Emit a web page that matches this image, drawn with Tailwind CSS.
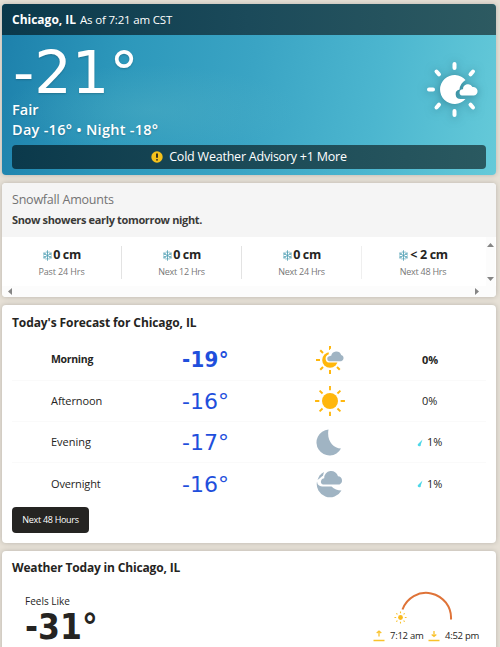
<!DOCTYPE html>
<html lang="en">
<head>
<meta charset="utf-8">
<title>Chicago, IL Weather</title>
<script src="https://cdn.jsdelivr.net/npm/@tailwindcss/browser@4"></script>
</head>
<body class="h-[647px] w-[500px] overflow-hidden bg-[#e6e0d6] pl-[2px] pr-[4px] pt-[4px] font-['Open_Sans',sans-serif] text-[#252422]">
<svg class="hidden">
  <symbol id="flake" viewBox="0 0 20 20"><g fill="none" stroke="#4f9fb4" stroke-width="1.5"><path d="M10 .5V19.500M1.800 5.200L18.200 14.800M1.800 14.800L18.200 5.200"/><path stroke-width="1.300" d="M7 2.500L10 5.500L13 2.500M7 17.500L10 14.500L13 17.500M2 9L6 7.700L5.200 3.600M18 11L14 12.300L14.800 16.400M2 11L6 12.300L5.200 16.400M18 9L14 7.700L14.800 3.600"/></g></symbol>
  <symbol id="rays" viewBox="0 0 60 60"><g fill="none" stroke="currentColor"><path d="M30 2v8M30 50v8M2 30h8M50 30h8M10.500 10.500l5.500 5.500M44 44l5.500 5.500M49.500 10.500l-5.500 5.500M10.500 49.500l5.500-5.500"/></g></symbol>
</svg>
<main class="flex flex-col gap-2">
  <section class="flex h-[171px] flex-col overflow-hidden rounded-[4px] bg-[radial-gradient(ellipse_at_30%_62%,#5ab5c555,#5ab5c500_30%),linear-gradient(100deg,#1d80ab_0%,#2d98bb_25%,#3aa4c4_50%,#4cb6cf_75%,#65cad9_100%)] text-white shadow-[0_0_5px_#0003]">
    <header class="flex h-[31px] items-center bg-[linear-gradient(90deg,#0b394b,#1b4a5a_50%,#2d5a61)] pl-[10px]">
      <h1 class="w-[68px] whitespace-nowrap text-[12px] font-bold tracking-[0px]">Chicago, IL</h1>
      <span class="whitespace-nowrap text-[11.5px] tracking-[-0.18px]">As of 7:21 am CST</span>
    </header>
    <div class="flex h-[110px] justify-between pl-[10px]">
      <div class="[text-shadow:0_1px_2px_#0003]">
        <div class="h-[65px] whitespace-nowrap pl-[1px] pt-[7px] font-['DejaVu_Sans'] text-[59px] leading-[62px]">-21°</div>
        <div class="h-[20px] text-[14.500px] font-semibold leading-[20px]">Fair</div>
        <div class="whitespace-nowrap text-[14.500px] font-semibold leading-[19px] tracking-[0.27px]">Day -16° • Night -18°</div>
      </div>
      <svg class="mr-[15px] mt-[25px] h-[58px] w-[58px] overflow-visible drop-shadow-[0_1px_5px_#14506090]" viewBox="0 0 58 58" fill="none" stroke="#fff" stroke-width="4" stroke-linecap="round">
        <path d="M31.500 4v4M31.500 51v4M6 29.500h4M13.500 11.500l2.500 2.800M50 11.500l-2.500 2.800M13.500 47.500l2.500-2.800M50 47.500l-2.500-2.800"/>
        <path d="M42.500 20A14.500 14.500 0 1 0 42.500 39H37.500A4.800 4.800 0 0 1 36.500 29.500Q37 23.500 42.500 20Z" fill="#fff" stroke="none"/>
        <path d="M39 35.500a3.200 3.200 0 0 1 1-6.300a5 5 0 0 1 9.500-2.200a4.300 4.300 0 0 1 1.500 8.500Z" fill="#fff" stroke="none"/>
      </svg>
    </div>
    <div class="ml-[10px] flex h-[24px] w-[474px] items-center justify-center gap-[6px] rounded-[4px] bg-[linear-gradient(90deg,#0b394b,#1b4a57_50%,#2a5960)] text-[12.500px] tracking-[-0.22px]">
      <svg class="h-[12px] w-[12px]" viewBox="0 0 12 12"><circle cx="6" cy="6" r="5.700" fill="#f4c21c"/><path d="M6 2.500v4.300M6 8.200v1.300" stroke="#222" stroke-width="1.800"/></svg>
      <span class="pt-px">Cold Weather Advisory +1 More</span>
    </div>
  </section>

  <section class="h-[114px] overflow-hidden rounded-[4px] bg-white shadow-[0_0_5px_#0003]">
    <header class="h-[54px] bg-[#f5f5f5] pl-[10px] pt-[7px]">
      <h2 class="h-[21px] text-[12.500px] leading-[19px] tracking-[-0.22px] text-[#737373]">Snowfall Amounts</h2>
      <p class="text-[11px] font-bold leading-[18px] tracking-[-0.35px] text-[#3a3a38]">Snow showers early tomorrow night.</p>
    </header>
    <div class="flex h-[49px]">
      <ul class="flex w-[484px] items-start pt-[9px]">
        <li class="flex h-[33px] w-[120px] flex-col items-center border-r border-[#e3e3e3]"><b class="flex h-[19px] items-center text-[12.500px] tracking-[-0.35px]"><svg class="h-[11px] w-[11px]"><use href="#flake"/></svg>0 cm</b><span class="text-[9px] leading-[14px] tracking-[-0.12px] text-[#777]">Past 24 Hrs</span></li>
        <li class="flex h-[33px] w-[120px] flex-col items-center border-r border-[#e3e3e3]"><b class="flex h-[19px] items-center text-[12.500px] tracking-[-0.35px]"><svg class="h-[11px] w-[11px]"><use href="#flake"/></svg>0 cm</b><span class="text-[9px] leading-[14px] tracking-[-0.25px] text-[#777]">Next 12 Hrs</span></li>
        <li class="flex h-[33px] w-[120px] flex-col items-center border-r border-[#efefef]"><b class="flex h-[19px] items-center text-[12.500px] tracking-[-0.35px]"><svg class="h-[11px] w-[11px]"><use href="#flake"/></svg>0 cm</b><span class="text-[9px] leading-[14px] tracking-[-0.25px] text-[#777]">Next 24 Hrs</span></li>
        <li class="flex h-[33px] w-[122px] flex-col items-center"><b class="flex h-[19px] items-center gap-[1px] whitespace-nowrap text-[12.500px] tracking-[-0.3px]"><svg class="h-[11px] w-[11px]"><use href="#flake"/></svg>&lt; 2 cm</b><span class="text-[9px] leading-[14px] tracking-[-0.25px] text-[#777]">Next 48 Hrs</span></li>
      </ul>
      <div class="flex w-[9px] flex-col items-center justify-between bg-[#fcfcfc] pb-[5px] pt-[6px]">
        <svg class="h-[4px] w-[7px]" viewBox="0 0 7 4"><path d="M0 4L3.500 0L7 4Z" fill="#858585"/></svg>
        <svg class="h-[4px] w-[7px]" viewBox="0 0 7 4"><path d="M0 0L3.500 4L7 0Z" fill="#858585"/></svg>
      </div>
    </div>
    <div class="flex h-[11px] items-center justify-between bg-[#fcfcfc] pl-[6px] pr-[17px]">
      <svg class="h-[7px] w-[4px]" viewBox="0 0 4 7"><path d="M4 0L0 3.500L4 7Z" fill="#858585"/></svg>
      <svg class="h-[7px] w-[4px]" viewBox="0 0 4 7"><path d="M0 0L4 3.500L0 7Z" fill="#858585"/></svg>
    </div>
  </section>

  <section class="h-[238px] rounded-[4px] bg-white px-[10px] shadow-[0_0_5px_#0003]">
    <h2 class="h-[35px] pt-[9px] text-[12px] font-bold leading-[18px] tracking-[-0.09px]">Today's Forecast for Chicago, IL</h2>
    <ul class="text-[11px]">
      <li class="grid h-[41px] grid-cols-[131px_155px_91px_1fr] items-center border-b border-[#fafafa] font-bold">
        <span class="pl-[39px] text-[10.500px] tracking-[-0.3px]">Morning</span>
        <span class="pl-[39px] font-['DejaVu_Sans_Condensed','DejaVu_Sans'] text-[22px] font-bold [font-stretch:condensed] leading-[30px] tracking-[0.3px] text-[#1f4fdc]">-19°</span>
        <svg class="ml-[16px] h-[32px] w-[32px]" viewBox="0 0 32 32"><use href="#rays" x="1" y="1" width="30" height="30" stroke-width="4" color="#ffb70d"/><circle cx="16" cy="16" r="7.800" fill="#ffb70d"/><path d="M12 16.500a5 5 0 0 1 2.800-6.200a6.500 6.500 0 0 1 13.200-1.800a5 5 0 0 1 3.500 10H14.500a3 3 0 0 1-2.500-2Z" fill="#fff"/><path d="M15.200 17.200a2.500 2.500 0 0 1 0-4.900a3 3 0 0 1 2-.5a5.200 5.200 0 0 1 10-.8a3.200 3.200 0 0 1 0 6.200Z" fill="#a0b4c3"/></svg>
        <span class="pl-[33px]">0%</span>
      </li>
      <li class="grid h-[41px] grid-cols-[131px_155px_91px_1fr] items-center border-b border-[#fafafa]">
        <span class="pl-[39px] tracking-[-0.08px]">Afternoon</span>
        <span class="pl-[39px] pt-px font-['DejaVu_Sans'] text-[22px] leading-[30px] text-[#1f4fdc]">-16°</span>
        <svg class="ml-[16px] h-[32px] w-[32px]" viewBox="0 0 32 32"><use href="#rays" width="32" height="32" stroke-width="3.500" color="#ffb70d"/><circle cx="16" cy="16" r="8" fill="#ffb70d"/></svg>
        <span class="pl-[33px]">0%</span>
      </li>
      <li class="grid h-[41px] grid-cols-[131px_155px_91px_1fr] items-center border-b border-[#fafafa]">
        <span class="pl-[39px] pt-px">Evening</span>
        <span class="pl-[39px] pt-px font-['DejaVu_Sans'] text-[22px] leading-[30px] text-[#1f4fdc]">-17°</span>
        <svg class="ml-[16px] h-[32px] w-[32px]" viewBox="0 0 32 32"><path d="M14.500 3.500A13 13 0 1 0 27 22.500C19 22 12.500 14.500 14.500 3.500Z" fill="#a0b4c3"/></svg>
        <span class="flex items-center gap-[4px] pl-[28px] pt-px"><svg class="h-[8px] w-[6px]" viewBox="0 0 6 8"><path d="M5.500 .5L3.800 5.500A1.500 1.500 0 1 1 1 5Z" fill="#4dd7e8"/></svg>1%</span>
      </li>
      <li class="grid h-[42px] grid-cols-[131px_155px_91px_1fr] items-center">
        <span class="pl-[39px] tracking-[-0.15px]">Overnight</span>
        <span class="pl-[39px] pt-px font-['DejaVu_Sans'] text-[22px] leading-[30px] text-[#1f4fdc]">-16°</span>
        <svg class="ml-[16px] h-[32px] w-[32px]" viewBox="0 0 32 32" fill="#a0b4c3"><path d="M10 4A13 13 0 0 0 3.500 12L5.500 10.500L9 7.500Z"/><path d="M3 13.500A13.200 13.200 0 0 0 27.500 22.500Q21.500 22.500 17.500 18.500H8Q3.500 18 3 13.500Z"/><path d="M9 16.500a3.200 3.200 0 0 1 1.200-6.200a7 7 0 0 1 13.800-2a4.300 4.300 0 0 1 1.500 8.200Z"/></svg>
        <span class="flex items-center gap-[4px] pl-[28px]"><svg class="h-[8px] w-[6px]" viewBox="0 0 6 8"><path d="M5.500 .5L3.800 5.500A1.500 1.500 0 1 1 1 5Z" fill="#4dd7e8"/></svg>1%</span>
      </li>
    </ul>
    <button class="mt-[2px] flex h-[26px] w-[77px] items-center justify-center whitespace-nowrap rounded-[4px] bg-[#252422] text-[9px] tracking-[-0.3px] text-white">Next 48 Hours</button>
  </section>

  <section class="h-[120px] rounded-[4px] bg-white pl-[10px] shadow-[0_0_5px_#0003]">
    <h2 class="h-[40px] pt-[8px] text-[12px] font-bold leading-[18px] tracking-[-0.16px]">Weather Today in Chicago, IL</h2>
    <div class="flex justify-between pl-[13px] pr-[15px]">
      <div>
        <div class="h-[18px] text-[10px] leading-[20px]">Feels Like</div>
        <div class="font-['DejaVu_Sans_Condensed','DejaVu_Sans'] text-[35px] font-bold [font-stretch:condensed] leading-[36px]">-31°</div>
      </div>
      <div class="flex w-[108px] flex-col">
        <svg class="h-[37px] w-[108px]" viewBox="0 0 108 37"><path d="M29.500 18.500A25 25 0 0 1 78 28.500" fill="none" stroke="#df7338" stroke-width="2"/><use href="#rays" x="21" y="20" width="13" height="13" stroke-width="5" color="#f9c22b"/><circle cx="27.500" cy="26.500" r="2.400" fill="#f9b91d"/></svg>
        <div class="flex h-[16px] items-center whitespace-nowrap text-[9.500px]">
          <svg class="mr-[5px] h-[12px] w-[12px]" viewBox="0 0 12 12" fill="none" stroke="#f9c22b" stroke-width="1.300"><path d="M6 6.500V1M3.700 3L6 1L8.300 3M.5 10.500H11.500"/></svg><span class="w-[38px] tracking-[-0.25px]">7:12 am</span>
          <svg class="mr-[5px] h-[12px] w-[12px]" viewBox="0 0 12 12" fill="none" stroke="#f9c22b" stroke-width="1.300"><path d="M6 1V6.500M3.700 4.500L6 6.500L8.300 4.500M.5 10.500H11.500"/></svg><span class="tracking-[-0.25px]">4:52 pm</span>
        </div>
      </div>
    </div>
  </section>
</main>
</body>
</html>
